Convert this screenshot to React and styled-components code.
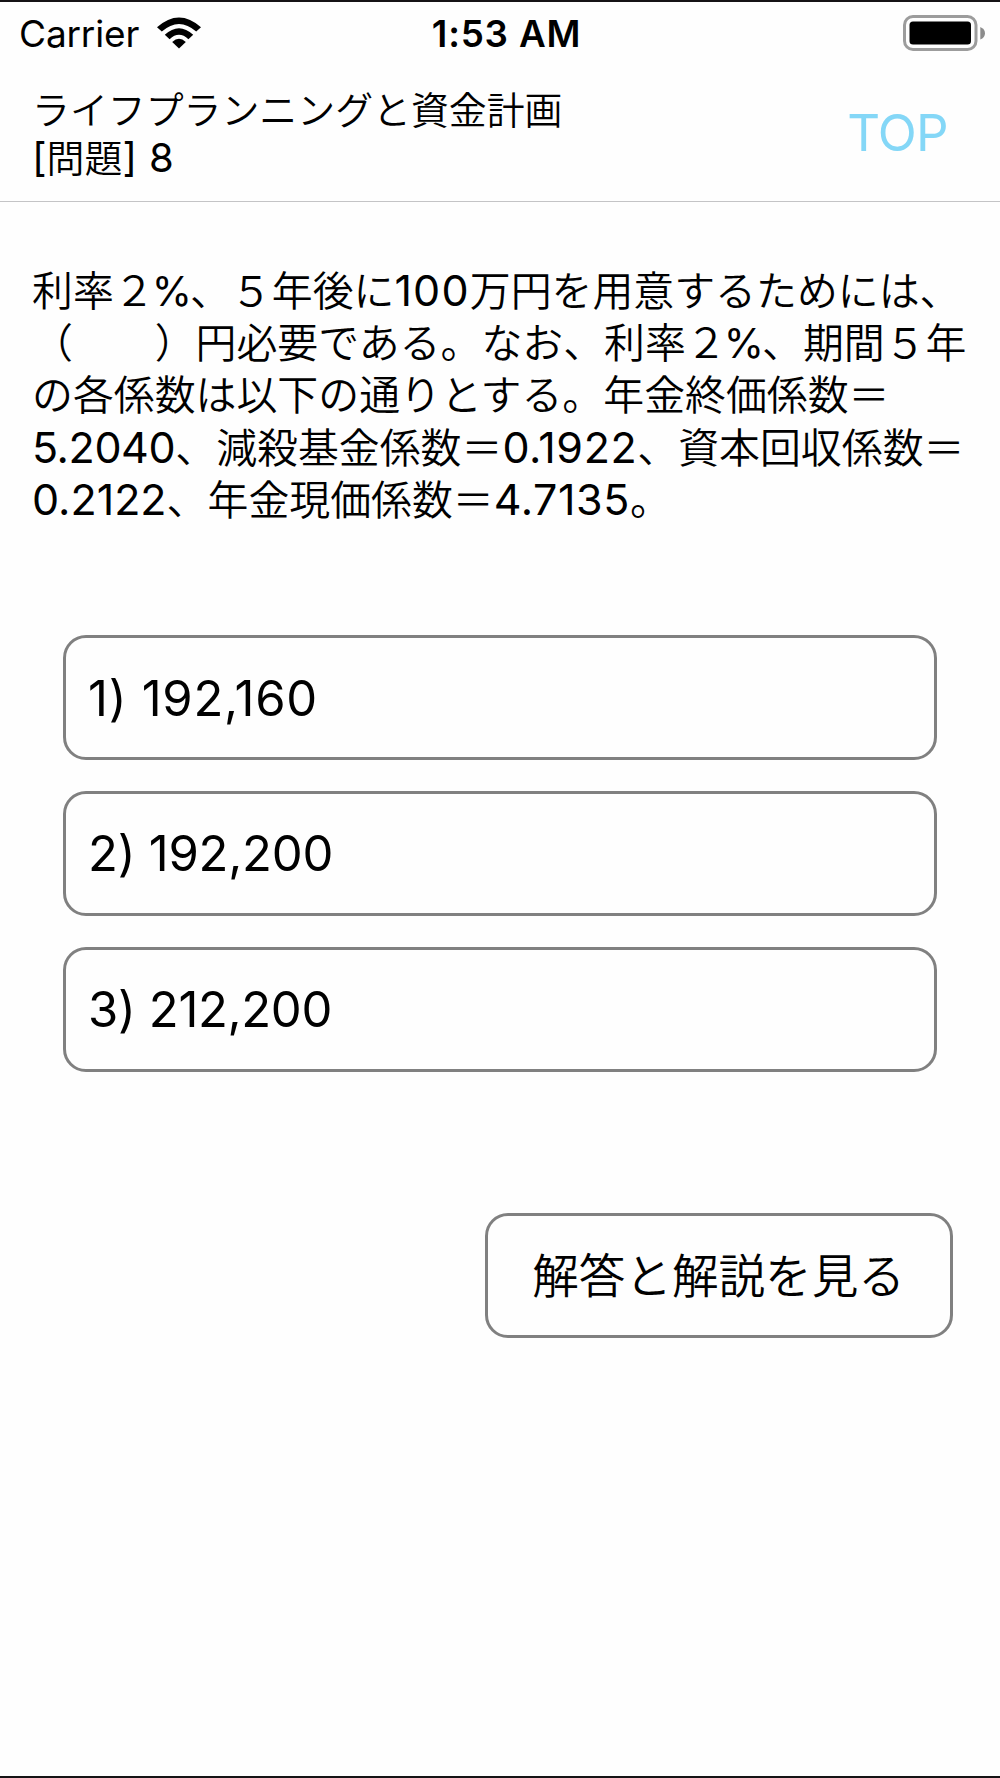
import styled, { createGlobalStyle } from 'styled-components';

const GlobalStyle = createGlobalStyle`
    * {
        box-sizing: border-box;
    }
    body {
        margin: 0;
        background: #fefefe;
    }
    p, h1 {
        margin: 0;
        font-weight: 350;
    }
`

const Screen = styled.div`
    display: flex;
    flex-direction: column;
    height: 1778px;
    border-top: 2px solid #151315;
    border-bottom: 2px solid #151315;
    background: #fefefe;
    color: #000;
    font-family: "Noto Sans CJK JP", sans-serif;
    overflow: hidden;
`

const StatusBar = styled.div`
    display: grid;
    grid-template-columns: 1fr auto 1fr;
    align-items: center;
    height: 64px;
    padding: 0 15px 2px 19px;
    font-family: Inter, sans-serif;
    font-size: 37px;
    line-height: 44px;
`

const Carrier = styled.div`
    display: flex;
    align-items: center;
    gap: 18px;
    font-weight: 370;
    letter-spacing: -0.15px;
    span {
        padding-top: 2px;
    }
`

const Clock = styled.div`
    font-weight: 600;
    font-size: 36.8px;
    letter-spacing: 0.8px;
    padding: 2px 0 0 9px;
`

const Battery = styled.svg`
    justify-self: end;
`

const Header = styled.header`
    display: flex;
    justify-content: space-between;
    align-items: center;
    height: 136px;
    padding: 0 52px 3px 32px;
    border-bottom: 1px solid #c4c4c6;
`

const Title = styled.h1`
    font-size: 37.9px;
    line-height: 48.5px;
    white-space: nowrap;
`

const TopLink = styled.a`
    font-family: Inter, sans-serif;
    font-size: 51px;
    font-weight: 390;
    letter-spacing: -0.7px;
    color: #84d7f7;
`

const Question = styled.div`
    padding: 61px 0 0 32px;
    font-size: 40.9px;
    line-height: 52.2px;
`

const Line = styled.p`
    white-space: pre;
`

const Latin = styled.span`
    font-family: Inter, sans-serif;
    font-weight: 370;
    font-size: ${(props) => props.$size || '43px'};
    letter-spacing: ${(props) => props.$spacing || '0'};
    line-height: 1;
`

const Percent = styled(Latin)`
    margin: 0 -2px 0 -3px;
    font-size: 41px;
`

const Choices = styled.div`
    display: flex;
    flex-direction: column;
    gap: 30.8px;
    padding: 111px 63px 0;
`

const Button = styled.button`
    display: flex;
    align-items: center;
    height: 125px;
    border: 3px solid #808080;
    border-radius: 23px;
    background: #fefefe;
    color: #000;
    font-family: "Noto Sans CJK JP", sans-serif;
`

const Choice = styled(Button)`
    padding: 1px 22px 0;
`

const AnswerButton = styled(Button)`
    align-self: flex-end;
    justify-content: center;
    width: 468px;
    margin: 141px 47px 0 0;
    padding: 0 1px 5px 0;
    font-size: 46.6px;
    font-weight: 350;
`

const choices = [
    { text: '1) 192,160', spacing: '0.7px' },
    { text: '2) 192,200', spacing: '-0.25px' },
    { text: '3) 212,200', spacing: '-0.35px' },
];

const WifiIcon = () => (
    <svg width="44" height="32" viewBox="0 0 44 32">
        <path d="M0 10.2Q22-9.4 44 10.2L39.2 14.6Q22-.6 4.8 14.6Z" />
        <path d="M7.8 17.8Q22 4.6 36.2 17.8L31.4 22.2Q22 13.4 12.6 22.2Z" />
        <path d="M15.2 25Q22 18.6 28.8 25L22 31.4Z" />
    </svg>
)

const App = () => {
    return (
        <>
            <GlobalStyle />
            <Screen>
                <StatusBar>
                    <Carrier>
                        <span>Carrier</span>
                        <WifiIcon />
                    </Carrier>
                    <Clock>1:53 AM</Clock>
                    <Battery width="82" height="36" viewBox="0 0 82 36">
                        <rect x="1.5" y="1.5" width="71.5" height="33" rx="8.5" fill="none" stroke="#9c9c9c" strokeWidth="3" />
                        <rect x="6.5" y="6.5" width="61.5" height="23" rx="3.5" />
                        <path d="M77.3 12Q82 14 82 18.2Q82 22.5 77.3 24.5Z" fill="#8c8c8c" />
                    </Battery>
                </StatusBar>
                <Header>
                    <Title>
                        ライフプランニングと資金計画
                        <br />
                        <Latin $size="40px">[</Latin>問題<Latin $size="40px" $spacing="0.4px">] 8</Latin>
                    </Title>
                    <TopLink>TOP</TopLink>
                </Header>
                <Question>
                    <Line>利率２<Percent>%</Percent>、５年後に<Latin $spacing="1.2px">100</Latin>万円を用意するためには、</Line>
                    <Line>（　　）円必要である。なお、利率２<Percent>%</Percent>、期間５年</Line>
                    <Line>の各係数は以下の通りとする。年金終価係数＝</Line>
                    <Line><Latin $spacing="-0.4px">5.2040</Latin>、減殺基金係数＝<Latin $spacing="0.6px">0.1922</Latin>、資本回収係数＝</Line>
                    <Line><Latin>0.2122</Latin>、年金現価係数＝<Latin $spacing="0.6px">4.7135</Latin>。</Line>
                </Question>
                <Choices>
                    {choices.map((choice) => (
                        <Choice key={choice.text}>
                            <Latin $size="49px" $spacing={choice.spacing}>{choice.text}</Latin>
                        </Choice>
                    ))}
                </Choices>
                <AnswerButton>解答と解説を見る</AnswerButton>
            </Screen>
        </>
    )
}
export default App
